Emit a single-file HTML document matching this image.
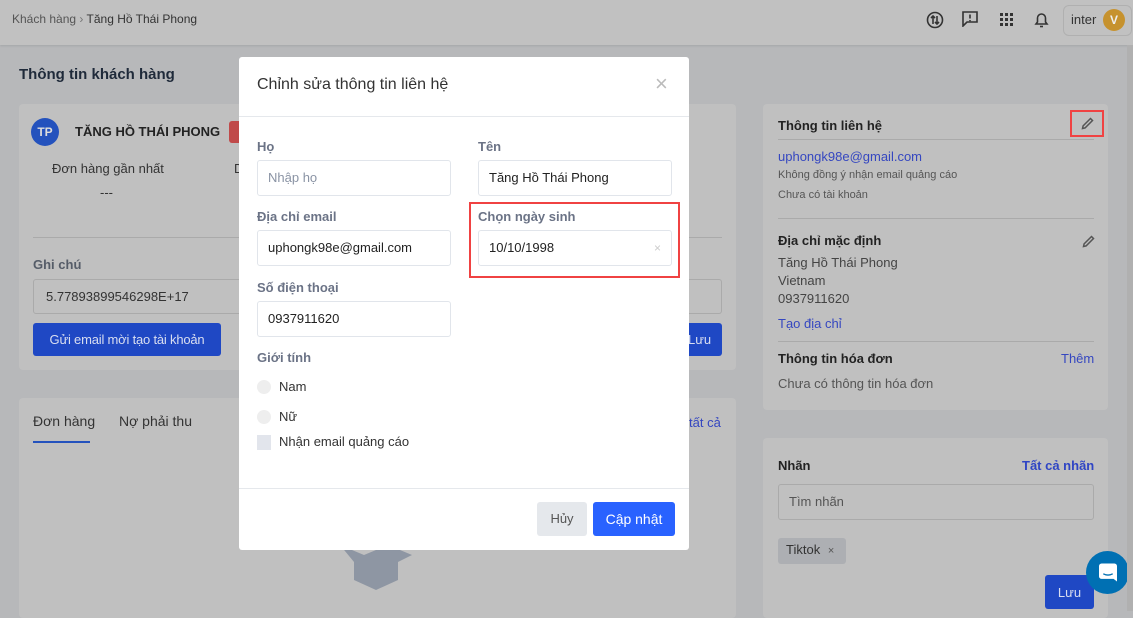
<!DOCTYPE html>
<html><head><meta charset="utf-8"><style>
*{box-sizing:border-box;margin:0;padding:0}
body{width:1133px;height:611px;overflow:hidden;background:#b7b8ba;font-family:"Liberation Sans",sans-serif;position:relative;color:#222}
.a{position:absolute;white-space:nowrap}
.card{position:absolute;background:#c0c0c0;border-radius:4px}
.btn{position:absolute;background:#1f48c4;color:#d9def0;border-radius:3px;font-size:13px;display:flex;align-items:center;justify-content:center}
.m{position:absolute;left:239px;top:57px;width:450px;height:493px;background:#fff;border-radius:3px}
.lbl{position:absolute;font-size:13px;font-weight:bold;color:#6b7386}
.inp{position:absolute;width:194px;height:36px;border:1px solid #e1e5eb;border-radius:3px;font-size:13px;color:#222;padding:0 10px;line-height:34px}
</style></head><body>
<div class="a" style="left:0;top:0;width:1133px;height:45px;background:#c1c1c1;box-shadow:0 1px 2px rgba(0,0,0,.1)"></div>
<div class="a" style="left:12px;top:12px;font-size:12px;color:#555">Khách hàng <span style="color:#777">›</span> <span style="color:#333">Tăng Hồ Thái Phong</span></div>
<svg class="a" style="left:926px;top:11px" width="18" height="18" viewBox="0 0 18 18" fill="none" stroke="#333" stroke-width="1.6"><circle cx="9" cy="9" r="7.5"/><path d="M7 13V5M5 7l2-2 2 2M11 5v8M9 11l2 2 2-2"/></svg>
<svg class="a" style="left:962px;top:11px" width="16" height="16" viewBox="0 0 16 16" fill="none" stroke="#333" stroke-width="1.6"><path d="M1 1h14v10H5l-4 4z"/><path d="M8 3.5v4M8 9v1.2"/></svg>
<svg class="a" style="left:1000px;top:13px" width="13" height="13" viewBox="0 0 13 13" fill="#333"><rect x="0" y="0" width="3" height="3"/><rect x="5" y="0" width="3" height="3"/><rect x="10" y="0" width="3" height="3"/><rect x="0" y="5" width="3" height="3"/><rect x="5" y="5" width="3" height="3"/><rect x="10" y="5" width="3" height="3"/><rect x="0" y="10" width="3" height="3"/><rect x="5" y="10" width="3" height="3"/><rect x="10" y="10" width="3" height="3"/></svg>
<svg class="a" style="left:1034px;top:11px" width="15" height="17" viewBox="0 0 15 17" fill="none" stroke="#333" stroke-width="1.6"><path d="M2 13h11l-1.5-2V7a4 4 0 0 0-8 0v4z"/><path d="M6 15.5h3"/></svg>
<div class="a" style="left:1063px;top:5px;width:69px;height:31px;border:1px solid #b0b0b0;border-radius:6px"></div>
<div class="a" style="left:1071px;top:12px;font-size:13px;color:#333">inter</div>
<div class="a" style="left:1103px;top:9px;width:22px;height:22px;border-radius:50%;background:#c6922e;color:#eee;font-size:12px;font-weight:bold;text-align:center;line-height:22px">V</div>

<div class="a" style="left:19px;top:66px;font-size:15px;font-weight:bold;color:#1f2a3a">Thông tin khách hàng</div>
<div class="card" style="left:19px;top:104px;width:717px;height:266px"></div>
<div class="a" style="left:31px;top:118px;width:28px;height:28px;border-radius:50%;background:#2452bd;color:#ddd;font-size:12px;font-weight:bold;text-align:center;line-height:28px">TP</div>
<div class="a" style="left:75px;top:124px;font-size:13px;font-weight:bold;color:#222">TĂNG HỒ THÁI PHONG</div>
<div class="a" style="left:229px;top:121px;width:12px;height:22px;background:#c04a4a;border-radius:3px 0 0 3px"></div>
<div class="a" style="left:52px;top:161px;font-size:13px;color:#333">Đơn hàng gần nhất</div>
<div class="a" style="left:234px;top:161px;font-size:13px;color:#333">D</div>
<div class="a" style="left:100px;top:185px;font-size:13px;color:#333">---</div>
<div class="a" style="left:33px;top:237px;width:689px;height:1px;background:#aaa"></div>
<div class="a" style="left:33px;top:257px;font-size:13px;font-weight:bold;color:#555c68">Ghi chú</div>
<div class="a" style="left:33px;top:279px;width:210px;height:35px;border:1px solid #aaa;border-radius:3px;font-size:13px;color:#333;padding-left:12px;line-height:33px">5.77893899546298E+17</div>
<div class="a" style="left:689px;top:279px;width:33px;height:35px;border:1px solid #aaa;border-left:none;border-radius:0 3px 3px 0"></div>
<div class="btn" style="left:33px;top:323px;width:188px;height:33px;font-size:13px;letter-spacing:-0.2px">Gửi email mời tạo tài khoản</div>
<div class="btn" style="left:680px;top:323px;width:42px;height:33px;border-radius:0 3px 3px 0;justify-content:flex-start;padding-left:8px">Lưu</div>

<div class="card" style="left:19px;top:398px;width:717px;height:220px"></div>
<div class="a" style="left:33px;top:413px;font-size:14px;color:#333">Đơn hàng</div>
<div class="a" style="left:33px;top:441px;width:57px;height:2px;background:#2452bd"></div>
<div class="a" style="left:119px;top:413px;font-size:14px;color:#333">Nợ phải thu</div>
<div class="a" style="left:689px;top:415px;font-size:13px;color:#3547c0">tất cả</div>
<svg class="a" style="left:340px;top:545px" width="72" height="50" viewBox="0 0 72 50"><path d="M0 0l24 10 24-10 24 10-14 7v18L36 45 14 35V17z" fill="#8e96a3"/></svg>

<div class="card" style="left:763px;top:104px;width:345px;height:306px"></div>
<div class="a" style="left:778px;top:118px;font-size:13px;font-weight:bold;color:#222">Thông tin liên hệ</div>
<div class="a" style="left:1070px;top:110px;width:34px;height:27px;border:2px solid #f04242"></div>
<svg class="a" style="left:1081px;top:117px" width="13" height="13" viewBox="0 0 13 13" fill="none" stroke="#555" stroke-width="1.5"><path d="M1.5 11.5l.6-2.6L9.5 1.5l2 2-7.4 7.4z"/></svg>
<div class="a" style="left:778px;top:139px;width:316px;height:1px;background:#aaa"></div>
<div class="a" style="left:778px;top:149px;font-size:13px;color:#3547c0">uphongk98e@gmail.com</div>
<div class="a" style="left:778px;top:169px;font-size:11px;color:#555">Không đồng ý nhận email quảng cáo</div>
<div class="a" style="left:778px;top:189px;font-size:11px;color:#555">Chưa có tài khoản</div>
<div class="a" style="left:778px;top:218px;width:316px;height:1px;background:#aaa"></div>
<div class="a" style="left:778px;top:233px;font-size:13px;font-weight:bold;color:#222">Địa chỉ mặc định</div>
<svg class="a" style="left:1082px;top:235px" width="13" height="13" viewBox="0 0 13 13" fill="none" stroke="#555" stroke-width="1.5"><path d="M1.5 11.5l.6-2.6L9.5 1.5l2 2-7.4 7.4z"/></svg>
<div class="a" style="left:778px;top:254px;font-size:13px;color:#444;line-height:18px">Tăng Hồ Thái Phong<br>Vietnam<br>0937911620</div>
<div class="a" style="left:778px;top:316px;font-size:13px;color:#3547c0">Tạo địa chỉ</div>
<div class="a" style="left:778px;top:341px;width:316px;height:1px;background:#aaa"></div>
<div class="a" style="left:778px;top:351px;font-size:13px;font-weight:bold;color:#222">Thông tin hóa đơn</div>
<div class="a" style="left:1061px;top:351px;font-size:13px;color:#3547c0">Thêm</div>
<div class="a" style="left:778px;top:376px;font-size:13px;color:#555">Chưa có thông tin hóa đơn</div>

<div class="card" style="left:763px;top:438px;width:345px;height:180px"></div>
<div class="a" style="left:778px;top:458px;font-size:13px;font-weight:bold;color:#222">Nhãn</div>
<div class="a" style="left:1022px;top:458px;font-size:13px;font-weight:bold;color:#2f45c4">Tất cả nhãn</div>
<div class="a" style="left:778px;top:484px;width:316px;height:36px;border:1px solid #aaa;border-radius:3px;font-size:13px;color:#555;padding-left:10px;line-height:34px">Tìm nhãn</div>
<div class="a" style="left:778px;top:538px;width:68px;height:26px;background:#adafb3;border-radius:3px;font-size:13px;color:#333;padding-left:8px;line-height:24px">Tiktok <span style="font-size:11px;color:#555;margin-left:4px">×</span></div>
<div class="btn" style="left:1045px;top:575px;width:49px;height:34px">Lưu</div>
<div class="a" style="left:1086px;top:551px;width:43px;height:43px;border-radius:50%;background:#0070b3"></div>
<svg class="a" style="left:1099px;top:563px" width="18" height="19" viewBox="0 0 21 21"><path d="M3 0h15a3 3 0 0 1 3 3v18l-4-3H3a3 3 0 0 1-3-3V3a3 3 0 0 1 3-3z" fill="#fff"/><path d="M5 12q5.5 3 11 0" stroke="#0070b3" stroke-width="1.5" fill="none"/></svg>
<div class="a" style="left:1127px;top:45px;width:6px;height:566px;background:#b0b0b0"></div>

<div class="m">
<div class="a" style="left:18px;top:19px;font-size:16px;color:#333">Chỉnh sửa thông tin liên hệ</div>
<div class="a" style="left:416px;top:14px;font-size:22px;color:#bbb">×</div>
<div class="a" style="left:0;top:59px;width:450px;height:1px;background:#e5e8ec"></div>
<div class="lbl" style="left:18px;top:82px">Họ</div>
<div class="inp" style="left:18px;top:103px;color:#8a93a4">Nhập họ</div>
<div class="lbl" style="left:239px;top:82px">Tên</div>
<div class="inp" style="left:239px;top:103px">Tăng Hồ Thái Phong</div>
<div class="lbl" style="left:18px;top:152px">Địa chỉ email</div>
<div class="inp" style="left:18px;top:173px">uphongk98e@gmail.com</div>
<div class="a" style="left:230px;top:145px;width:211px;height:76px;border:2px solid #f04242"></div>
<div class="lbl" style="left:239px;top:152px">Chọn ngày sinh</div>
<div class="inp" style="left:239px;top:173px">10/10/1998<span style="position:absolute;right:10px;color:#ccc;font-size:12px">×</span></div>
<div class="lbl" style="left:18px;top:223px">Số điện thoại</div>
<div class="inp" style="left:18px;top:244px">0937911620</div>
<div class="lbl" style="left:18px;top:293px">Giới tính</div>
<div class="a" style="left:18px;top:323px;width:14px;height:14px;border-radius:50%;background:#eee"></div>
<div class="a" style="left:40px;top:322px;font-size:13px;color:#333">Nam</div>
<div class="a" style="left:18px;top:353px;width:14px;height:14px;border-radius:50%;background:#eee"></div>
<div class="a" style="left:40px;top:352px;font-size:13px;color:#333">Nữ</div>
<div class="a" style="left:18px;top:378px;width:14px;height:15px;background:#e2e5ec"></div>
<div class="a" style="left:40px;top:377px;font-size:13px;color:#333">Nhận email quảng cáo</div>
<div class="a" style="left:0;top:431px;width:450px;height:1px;background:#e5e8ec"></div>
<div class="a" style="left:298px;top:445px;width:50px;height:34px;background:#e5e8ec;border-radius:3px;font-size:13px;color:#555;text-align:center;line-height:34px">Hủy</div>
<div class="a" style="left:354px;top:445px;width:82px;height:34px;background:#2962ff;border-radius:3px;font-size:14px;color:#fff;text-align:center;line-height:34px">Cập nhật</div>
</div>
</body></html>
